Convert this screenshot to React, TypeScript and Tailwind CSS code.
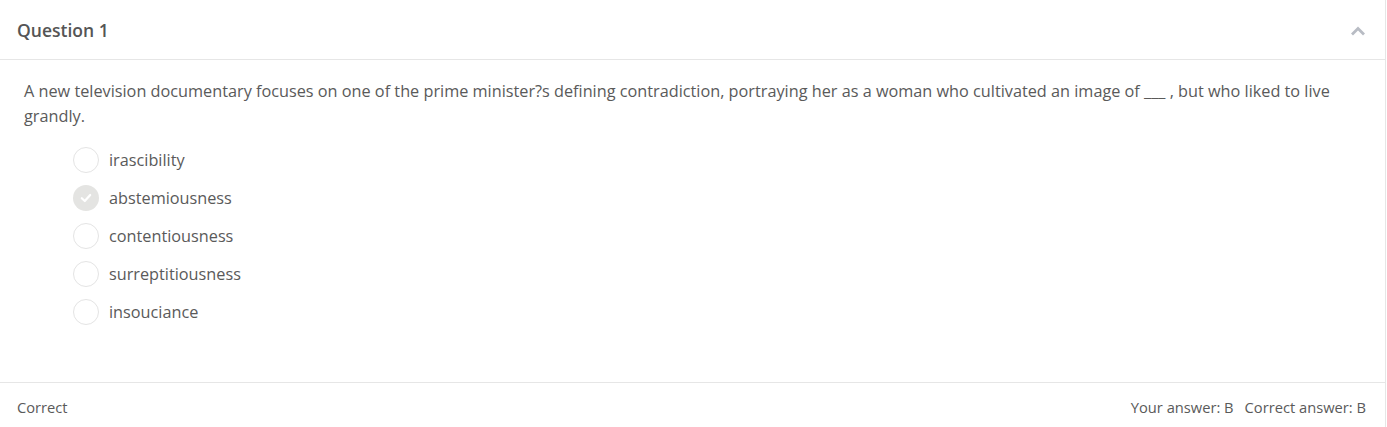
import React from "react";

const options = [
    { id: "A", text: "irascibility" },
    { id: "B", text: "abstemiousness" },
    { id: "C", text: "contentiousness" },
    { id: "D", text: "surreptitiousness" },
    { id: "E", text: "insouciance" },
];

export default function App() {
    const selected = "B";
    return (
        <div className="bg-white w-[1386px] h-[427px] border-r border-[#e6e6e6] text-[#5a5a5a]" style={{ fontFamily: '"Open Sans", sans-serif' }}>
            {/*HEADER*/}
            <div className="flex items-center justify-between h-[60px] pt-[2px] pl-[17px] pr-[19px] border-b border-[#e6e6e6]">
                <h2 className="text-[17.5px] font-semibold text-[#555]">Question 1</h2>
                <svg width="16" height="10" viewBox="0 0 16 10" className="mt-[1px]">
                    <path d="M2 8.5 L8 2.5 L14 8.5" fill="none" stroke="#b8bcc4" strokeWidth="2.8" />
                </svg>
            </div>
            {/*BODY*/}
            <div className="h-[322px] pl-[24px] pr-[40px] pt-[19px]">
                <p className="text-[16.25px] leading-[25px]">
                    A new television documentary focuses on one of the prime minister?s defining contradiction, portraying her as a woman who cultivated an image of ___ , but who liked to live grandly.
                </p>
                <div className="flex flex-col gap-[12px] mt-[18px] pl-[49px]">
                    {options.map((opt) => (
                        <label key={opt.id} className="flex items-center gap-[10px] h-[26px]">
                            {opt.id === selected ? (
                                <span className="w-[26px] h-[26px] rounded-full bg-[#e4e4e2] flex items-center justify-center">
                                    <svg width="14" height="14" viewBox="0 0 14 14">
                                        <path d="M2.8 7.2 L5.8 10 L11.2 4" fill="none" stroke="#fff" strokeWidth="2.2" strokeLinecap="round" strokeLinejoin="round" />
                                    </svg>
                                </span>
                            ) : (
                                <span className="w-[26px] h-[26px] rounded-full border border-[#e4e4e4] bg-white" />
                            )}
                            <span className="text-[16.25px]">{opt.text}</span>
                        </label>
                    ))}
                </div>
            </div>
            {/*FOOTER*/}
            <div className="flex items-center justify-between h-[45px] pt-[4px] pl-[17px] pr-[19px] border-t border-[#e6e6e6] text-[14.7px]">
                <p>Correct</p>
                <p>
                    <span>Your answer: B</span>
                    <span className="ml-[11px]">Correct answer: B</span>
                </p>
            </div>
        </div>
    );
}
